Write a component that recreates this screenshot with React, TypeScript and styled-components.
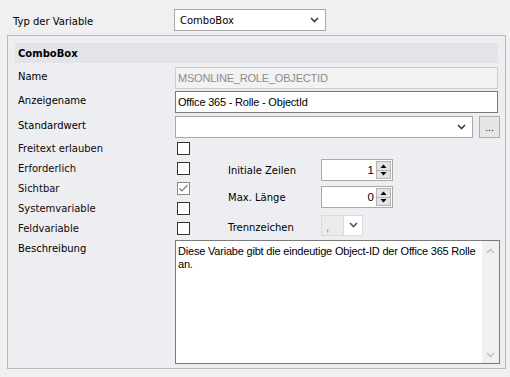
import React from 'react';
import styled, { createGlobalStyle } from 'styled-components';

const UI_FONT = `"DejaVu Sans", Verdana, sans-serif`;
const INPUT_FONT = `"Liberation Sans", Arial, sans-serif`;

const GlobalStyle = createGlobalStyle`
  html, body {
    margin: 0;
    padding: 0;
    background: #f0f0f0;
    font-family: ${UI_FONT};
    font-size: 10px;
    color: #000;
  }
`;

const Page = styled.div`
  width: 510px;
  height: 377px;
  box-sizing: border-box;
  padding: 9px 4px 0 7px;
`;

const TopRow = styled.div`
  display: flex;
  align-items: center;
  height: 22px;
`;

const TopLabel = styled.div`
  width: 167px;
  box-sizing: border-box;
  padding-left: 6px;
  padding-top: 2px;
`;

const DropDown = styled.div<{ $width?: number }>`
  display: flex;
  align-items: center;
  justify-content: space-between;
  box-sizing: border-box;
  width: ${(p) => (p.$width ? `${p.$width}px` : 'auto')};
  flex: ${(p) => (p.$width ? 'none' : '1')};
  height: 22px;
  padding: 0 6px 0 5px;
  background: #fff;
  border: 1px solid #a8a8a8;
`;

const Panel = styled.div`
  margin-top: 4px;
  box-sizing: border-box;
  width: 499px;
  height: 334px;
  background: #eceef1;
  border: 1px solid #b9b9b9;
  padding: 7px 7px 4px 7px;
`;

const PanelHeader = styled.div`
  height: 20px;
  display: flex;
  align-items: center;
  padding-left: 3px;
  background: #e3e4e9;
  font-weight: bold;
`;

const FieldRow = styled.div<{ $top: number }>`
  display: flex;
  align-items: flex-start;
  margin-top: ${(p) => p.$top}px;
`;

const Label = styled.div<{ $pad?: number }>`
  width: 160px;
  flex: none;
  box-sizing: border-box;
  padding-left: 3px;
  padding-top: ${(p) => p.$pad ?? 4}px;
`;

const TextBox = styled.input<{ $disabled?: boolean }>`
  flex: 1;
  min-width: 0;
  height: 22px;
  box-sizing: border-box;
  margin: 0;
  padding: 0 2px;
  font-family: ${INPUT_FONT};
  font-size: 11px;
  letter-spacing: -0.2px;
  color: ${(p) => (p.$disabled ? '#8c8c8c' : '#000')};
  background: ${(p) => (p.$disabled ? '#f2f2f3' : '#fff')};
  border: 1px solid ${(p) => (p.$disabled ? '#cdcdcd' : '#7a7a7a')};
  border-radius: 0;
  outline: none;
`;

const DotsButton = styled.div`
  width: 21px;
  height: 22px;
  box-sizing: border-box;
  margin-left: 6px;
  margin-right: -2px;
  background: #e6e6e6;
  border: 1px solid #adadad;
  display: flex;
  align-items: flex-end;
  justify-content: center;
  padding-bottom: 4px;
  font-size: 9px;
  line-height: 9px;
`;

const OptionsArea = styled.div`
  display: flex;
`;

const CheckColumn = styled.div`
  width: 213px;
`;

const CheckRow = styled.div`
  display: flex;
  align-items: center;
  height: 20px;
`;

const CheckLabel = styled.div`
  width: 162px;
  padding-left: 3px;
  box-sizing: border-box;
  color: #140808;
`;

const CheckBox = styled.span<{ $checked?: boolean }>`
  display: flex;
  align-items: center;
  justify-content: center;
  width: 13px;
  height: 13px;
  box-sizing: border-box;
  background: #fff;
  border: 1px solid ${(p) => (p.$checked ? '#8a8a8a' : '#333')};
`;

const SideColumn = styled.div`
  display: flex;
  flex-direction: column;
  padding-top: 21px;
`;

const SideRow = styled.div<{ $top: number }>`
  display: flex;
  align-items: center;
  margin-top: ${(p) => p.$top}px;
`;

const SideLabel = styled.div<{ $shift?: number }>`
  width: 93px;
  padding-top: ${(p) => p.$shift ?? 0}px;
`;

const SpinBox = styled.div`
  display: flex;
  align-items: center;
  box-sizing: border-box;
  width: 72px;
  height: 22px;
  background: #fff;
  border: 1px solid #a9a9a9;
  padding: 0 1px 0 2px;
`;

const SpinValue = styled.div`
  flex: 1;
  text-align: right;
  padding-right: 2px;
  font-family: ${INPUT_FONT};
  font-size: 11.5px;
`;

const SpinButtons = styled.div`
  display: flex;
  flex-direction: column;
  width: 15px;
  height: 18px;
`;

const SpinButton = styled.div`
  flex: 1;
  display: flex;
  align-items: center;
  justify-content: center;
  background: #e3e3e3;
  border: 1px solid #b4b4b4;
  & + & {
    border-top: none;
  }
`;

const SeparatorBox = styled.div`
  display: flex;
  box-sizing: border-box;
  width: 42px;
  height: 21px;
  border: 1px solid #dadada;
  background: #fff;
`;

const SeparatorValue = styled.div`
  width: 22px;
  background: #ebebeb;
  border-right: 1px solid #dadada;
  font-family: ${INPUT_FONT};
  font-size: 11px;
  color: #7a70a8;
  padding: 5px 0 0 4px;
  box-sizing: border-box;
`;

const SeparatorArrow = styled.div`
  flex: 1;
  display: flex;
  align-items: center;
  justify-content: center;
  padding-bottom: 2px;
`;

const Memo = styled.div`
  flex: 1;
  display: flex;
  height: 124px;
  box-sizing: border-box;
  margin-right: -2px;
  background: #fff;
  border: 1px solid #7a7a7a;
`;

const MemoText = styled.div`
  flex: 1;
  padding: 4px 2px;
  font-family: ${INPUT_FONT};
  font-size: 11px;
  letter-spacing: -0.2px;
  line-height: 13px;
  color: #000;
`;

const ScrollBar = styled.div`
  width: 17px;
  background: #f0f0f0;
  display: flex;
  flex-direction: column;
  justify-content: space-between;
  align-items: center;
  padding: 7px 0 5px;
  box-sizing: border-box;
`;

const Chevron: React.FC<{ color?: string; up?: boolean }> = ({ color = '#3c3c3c', up }) => (
  <svg width="9" height="6" viewBox="0 0 9 6">
    <polyline
      points={up ? '1,5 4.5,1.5 8,5' : '1,1 4.5,4.5 8,1'}
      fill="none"
      stroke={color}
      strokeWidth="1.6"
    />
  </svg>
);

const Tri: React.FC<{ up?: boolean }> = ({ up }) => (
  <svg width="7" height="4" viewBox="0 0 7 4">
    <polygon points={up ? '0.5,4 3.5,0.5 6.5,4' : '0.5,0 3.5,3.5 6.5,0'} fill="#000" />
  </svg>
);

const Check = () => (
  <svg width="11" height="11" viewBox="0 0 11 11">
    <polyline points="1.5,5.5 4,8 9.5,2" fill="none" stroke="#7d7d7d" strokeWidth="1.2" />
  </svg>
);

const checks = [
  { label: 'Freitext erlauben', checked: false },
  { label: 'Erforderlich', checked: false },
  { label: 'Sichtbar', checked: true },
  { label: 'Systemvariable', checked: false },
  { label: 'Feldvariable', checked: false },
];

const App: React.FC = () => {
  return (
    <>
      <GlobalStyle />
      <Page>
        <TopRow>
          <TopLabel>Typ der Variable</TopLabel>
          <DropDown $width={152}>
            <span>ComboBox</span>
            <Chevron />
          </DropDown>
        </TopRow>

        <Panel>
          <PanelHeader>ComboBox</PanelHeader>

          <FieldRow $top={4}>
            <Label>Name</Label>
            <TextBox $disabled readOnly value="MSONLINE_ROLE_OBJECTID" />
          </FieldRow>

          <FieldRow $top={2}>
            <Label>Anzeigename</Label>
            <TextBox readOnly value="Office 365 - Rolle - ObjectId" />
          </FieldRow>

          <FieldRow $top={3}>
            <Label>Standardwert</Label>
            <DropDown>
              <span />
              <Chevron />
            </DropDown>
            <DotsButton>...</DotsButton>
          </FieldRow>

          <OptionsArea>
            <CheckColumn>
              {checks.map((c) => (
                <CheckRow key={c.label}>
                  <CheckLabel>{c.label}</CheckLabel>
                  <CheckBox $checked={c.checked}>{c.checked && <Check />}</CheckBox>
                </CheckRow>
              ))}
            </CheckColumn>
            <SideColumn>
              <SideRow $top={0}>
                <SideLabel>Initiale Zeilen</SideLabel>
                <SpinBox>
                  <SpinValue>1</SpinValue>
                  <SpinButtons>
                    <SpinButton><Tri up /></SpinButton>
                    <SpinButton><Tri /></SpinButton>
                  </SpinButtons>
                </SpinBox>
              </SideRow>
              <SideRow $top={5}>
                <SideLabel>Max. Länge</SideLabel>
                <SpinBox>
                  <SpinValue>0</SpinValue>
                  <SpinButtons>
                    <SpinButton><Tri up /></SpinButton>
                    <SpinButton><Tri /></SpinButton>
                  </SpinButtons>
                </SpinBox>
              </SideRow>
              <SideRow $top={7}>
                <SideLabel $shift={3}>Trennzeichen</SideLabel>
                <SeparatorBox>
                  <SeparatorValue>,</SeparatorValue>
                  <SeparatorArrow>
                    <Chevron color="#555" />
                  </SeparatorArrow>
                </SeparatorBox>
              </SideRow>
            </SideColumn>
          </OptionsArea>

          <FieldRow $top={2}>
            <Label $pad={3}>Beschreibung</Label>
            <Memo>
              <MemoText>
                Diese Variabe gibt die eindeutige Object-ID der Office 365 Rolle
                <br />
                an.
              </MemoText>
              <ScrollBar>
                <Chevron up color="#c2c2c2" />
                <Chevron color="#c2c2c2" />
              </ScrollBar>
            </Memo>
          </FieldRow>
        </Panel>
      </Page>
    </>
  );
};

export default App;
